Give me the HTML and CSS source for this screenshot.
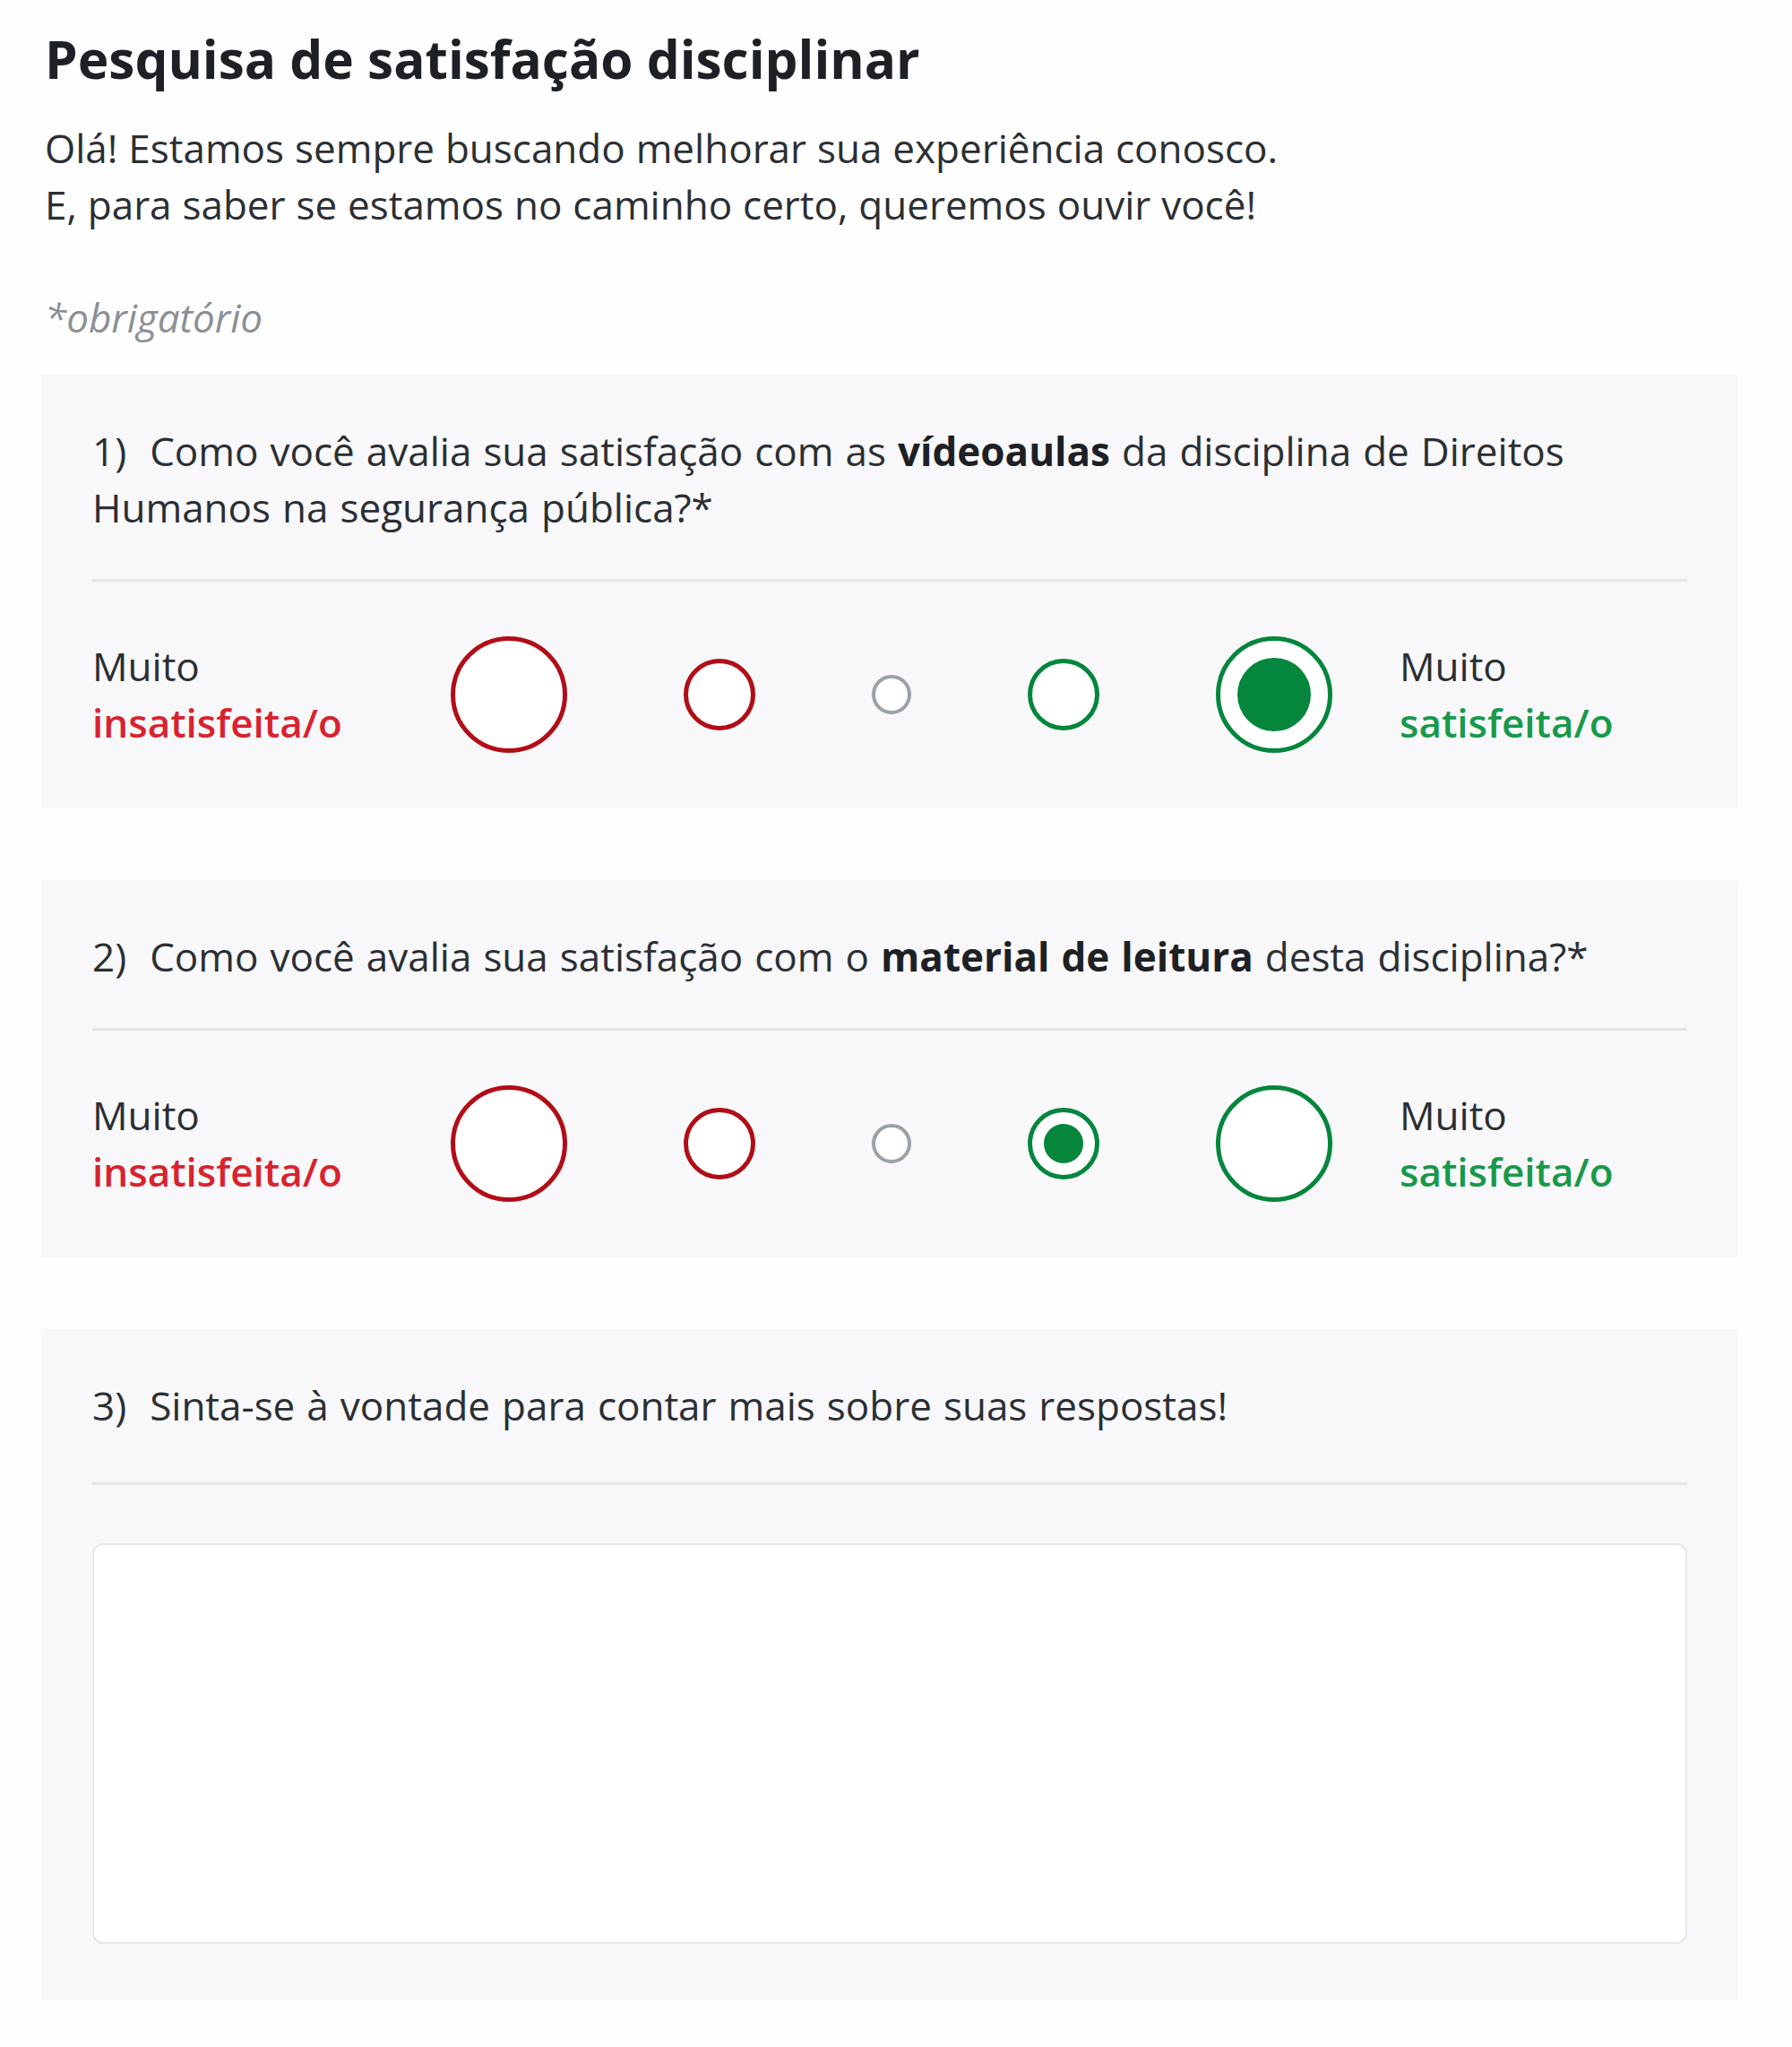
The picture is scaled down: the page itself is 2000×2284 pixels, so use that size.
FILE: index.html
```html
<!DOCTYPE html>
<html lang="pt-BR">
<head>
<meta charset="utf-8">
<title>Pesquisa de satisfação disciplinar</title>
<link rel="stylesheet" href="styles.css">
</head>
<body>
<main class="survey">
  <h1 class="title">Pesquisa de satisfação disciplinar</h1>
  <p class="intro">Olá! Estamos sempre buscando melhorar sua experiência conosco.<br>E, para saber se estamos no caminho certo, queremos ouvir você!</p>
  <p class="required">*obrigatório</p>

  <section class="card">
    <p class="question"><span class="num">1)</span>Como você avalia sua satisfação com as <strong>vídeoaulas</strong> da disciplina de Direitos Humanos na segurança pública?*</p>
    <hr class="divider">
    <div class="scale">
      <div class="scale-label scale-label-left">Muito<br><span class="neg-text">insatisfeita/o</span></div>
      <div class="options">
        <span class="radio big neg"></span>
        <span class="radio mid neg"></span>
        <span class="radio small neutral"></span>
        <span class="radio mid pos"></span>
        <span class="radio big pos checked"></span>
      </div>
      <div class="scale-label scale-label-right">Muito<br><span class="pos-text">satisfeita/o</span></div>
    </div>
  </section>

  <section class="card">
    <p class="question"><span class="num">2)</span>Como você avalia sua satisfação com o <strong>material de leitura</strong> desta disciplina?*</p>
    <hr class="divider">
    <div class="scale">
      <div class="scale-label scale-label-left">Muito<br><span class="neg-text">insatisfeita/o</span></div>
      <div class="options">
        <span class="radio big neg"></span>
        <span class="radio mid neg"></span>
        <span class="radio small neutral"></span>
        <span class="radio mid pos checked"></span>
        <span class="radio big pos"></span>
      </div>
      <div class="scale-label scale-label-right">Muito<br><span class="pos-text">satisfeita/o</span></div>
    </div>
  </section>

  <section class="card card-last">
    <p class="question"><span class="num">3)</span>Sinta-se à vontade para contar mais sobre suas respostas!</p>
    <hr class="divider divider-wide">
    <textarea class="answer" aria-label="Resposta"></textarea>
  </section>
</main>
</body>
</html>
```

FILE: styles.css
```css
html, body {
  margin: 0;
  padding: 0;
  background: #fefefe;
}

body {
  font-family: "Open Sans", "Noto Sans", sans-serif;
  font-size: 44px;
  line-height: 63px;
  word-spacing: 0.5px;
  color: #24282c;
}

.survey {
  width: 1894px;
  padding: 33px 0 50px 46px;
}

.title {
  margin: 0 0 0 4px;
  font-size: 58.5px;
  line-height: 65px;
  font-weight: 700;
  word-spacing: 0;
  color: #1d2024;
}

.intro {
  margin: 36px 0 0 4px;
  color: #2b2f33;
}

.required {
  margin: 63px 0 0 4px;
  font-style: italic;
  color: #8b9096;
}

.card {
  margin-top: 32px;
  background: #f8f8fa;
  padding: 54px 57px 62px 57px;
}

.card + .card {
  margin-top: 80px;
}

.card-last {
  padding-bottom: 63px;
}

.question {
  margin: 0;
  color: #2b2f33;
  word-spacing: 1.6px;
}

.question strong {
  font-weight: 700;
  color: #1d2024;
}

.num {
  margin-right: 26px;
}

.divider {
  margin: 48px 0 0 0;
  border: 0;
  height: 3px;
  background: #e4e5e7;
}

.divider-wide {
  margin-top: 54px;
}

.scale {
  margin-top: 61px;
  display: flex;
  align-items: center;
  height: 130px;
}

.scale-label {
  color: #2b2f33;
}

.scale-label-left {
  flex: 0 0 400px;
}

.scale-label-right {
  margin-left: 75px;
}

.neg-text {
  color: #d8232f;
  font-weight: 600;
}

.pos-text {
  color: #17994a;
  font-weight: 600;
}

.options {
  display: flex;
  align-items: center;
  gap: 130px;
}

.radio {
  box-sizing: border-box;
  display: flex;
  align-items: center;
  justify-content: center;
  border-radius: 50%;
  background: #ffffff;
  border-style: solid;
}

.radio.big {
  width: 130px;
  height: 130px;
  border-width: 5px;
}

.radio.mid {
  width: 80px;
  height: 80px;
  border-width: 5px;
}

.radio.small {
  width: 44px;
  height: 44px;
  border-width: 4px;
}

.radio.neg {
  border-color: #b20d17;
}

.radio.pos {
  border-color: #04863c;
}

.radio.neutral {
  border-color: #9ba1a8;
}

.radio.checked::after {
  content: "";
  border-radius: 50%;
  background: #04863c;
}

.radio.big.checked::after {
  width: 82px;
  height: 82px;
}

.radio.mid.checked::after {
  width: 44px;
  height: 44px;
}

.answer {
  display: block;
  box-sizing: border-box;
  width: 100%;
  height: 447px;
  margin-top: 65px;
  background: #ffffff;
  border: 2px solid #e6e7e9;
  border-radius: 12px;
  resize: none;
  font: inherit;
}
```
